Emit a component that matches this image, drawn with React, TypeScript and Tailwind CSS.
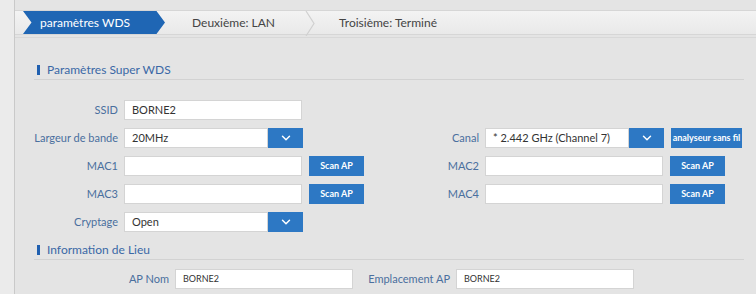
import { ChevronDown } from "lucide-react";

const font = { fontFamily: 'Lato, "Open Sans", sans-serif' };

function Label({ children, w }: { children: string; w: string }) {
  return (
    <span className={`${w} shrink-0 whitespace-nowrap pr-[6px] text-right text-[11px] text-[#4a6f9e]`}>{children}</span>
  );
}

function TextBox({ value = "", w = "w-[178px]", small = false }: { value?: string; w?: string; small?: boolean }) {
  return (
    <div
      className={`${w} flex h-[20px] shrink-0 items-center border border-[#d4d4d4] bg-white px-[7px] ${
        small ? "text-[9px]" : "text-[11px]"
      } text-[#333]`}
    >
      {value}
    </div>
  );
}

function Select({ value, w = "w-[144px]" }: { value: string; w?: string }) {
  return (
    <div className="flex h-[20px] shrink-0">
      <div className={`${w} flex items-center whitespace-nowrap border border-[#d4d4d4] bg-white px-[7px] text-[11px] text-[#333]`}>
        {value}
      </div>
      <div className="flex w-[35px] items-center justify-center bg-[#2d78c4]">
        <ChevronDown size={14} strokeWidth={2.5} className="text-white" />
      </div>
    </div>
  );
}

function Btn({ children, w = "w-[55px]" }: { children: string; w?: string }) {
  return (
    <div
      className={`${w} ml-[7px] flex h-[20px] shrink-0 items-center justify-center whitespace-nowrap bg-[#2d78c4] text-[9px] font-bold text-white`}
    >
      {children}
    </div>
  );
}

function Header({ children }: { children: string }) {
  return (
    <div className="flex items-center gap-[7px] border-b border-[#d2d2d2] pb-[2px] pl-[3px]">
      <span className="h-[10px] w-[3px] bg-[#2060b0]" />
      <span className="text-[12px] leading-[14px] text-[#3a68a6]">{children}</span>
    </div>
  );
}

export default function App() {
  return (
    <div style={font} className="flex h-[294px] w-[756px] overflow-hidden bg-[#e4e4e4]">
      <div className="w-[15px] shrink-0 border-r border-[#c9c9c9] bg-[#ebebeb]" />

      <div className="flex-1">
        {/* steps */}
        <div className="mt-[10px] flex h-[25px] items-stretch border-y border-[#d6d6d6] bg-gradient-to-b from-[#f3f3f3] to-[#e9e9e9] pl-[8px]">
          <div className="flex w-[142px] items-center bg-[#1f66b4] pl-[17px] text-[12px] text-white [clip-path:polygon(0_0,94%_0,100%_50%,94%_100%,0_100%,6%_50%)]">
            paramètres WDS
          </div>
          <div className="flex w-[140px] items-center pl-[27px] text-[12px] text-[#444]">Deuxième: LAN</div>
          <svg width="10" height="25" viewBox="0 0 10 25" className="shrink-0">
            <path d="M1 0 L9 12.5 L1 25" fill="none" stroke="#d0d0d0" strokeWidth="1.2" />
          </svg>
          <div className="flex items-center pl-[24px] text-[12px] text-[#444]">Troisième: Terminé</div>
        </div>
        <div className="mt-[2px] h-px bg-[#d8d8d8]" />

        <div className="mr-[12px] ml-[19px] pt-[25px]">
          <Header>Paramètres Super WDS</Header>

          <div className="mt-[20px] flex flex-col gap-[8px]">
            <div className="flex items-center">
              <Label w="w-[90px]">SSID</Label>
              <TextBox value="BORNE2" />
            </div>

            <div className="flex items-center">
              <Label w="w-[90px]">Largeur de bande</Label>
              <Select value="20MHz" />
              <Label w="w-[182px]">Canal</Label>
              <Select value="* 2.442 GHz (Channel 7)" />
              <Btn w="w-[71px]">analyseur sans fil</Btn>
            </div>

            <div className="flex items-center">
              <Label w="w-[90px]">MAC1</Label>
              <TextBox />
              <Btn>Scan AP</Btn>
              <Label w="w-[121px]">MAC2</Label>
              <TextBox />
              <Btn>Scan AP</Btn>
            </div>

            <div className="flex items-center">
              <Label w="w-[90px]">MAC3</Label>
              <TextBox />
              <Btn>Scan AP</Btn>
              <Label w="w-[121px]">MAC4</Label>
              <TextBox />
              <Btn>Scan AP</Btn>
            </div>

            <div className="flex items-center">
              <Label w="w-[90px]">Cryptage</Label>
              <Select value="Open" />
            </div>
          </div>

          <div className="mt-[11px]">
            <Header>Information de Lieu</Header>
          </div>

          <div className="mt-[9px] flex items-center">
            <Label w="w-[141px]">AP Nom</Label>
            <TextBox value="BORNE2" small />
            <Label w="w-[103px]">Emplacement AP</Label>
            <TextBox value="BORNE2" small />
          </div>
        </div>
      </div>
    </div>
  );
}
